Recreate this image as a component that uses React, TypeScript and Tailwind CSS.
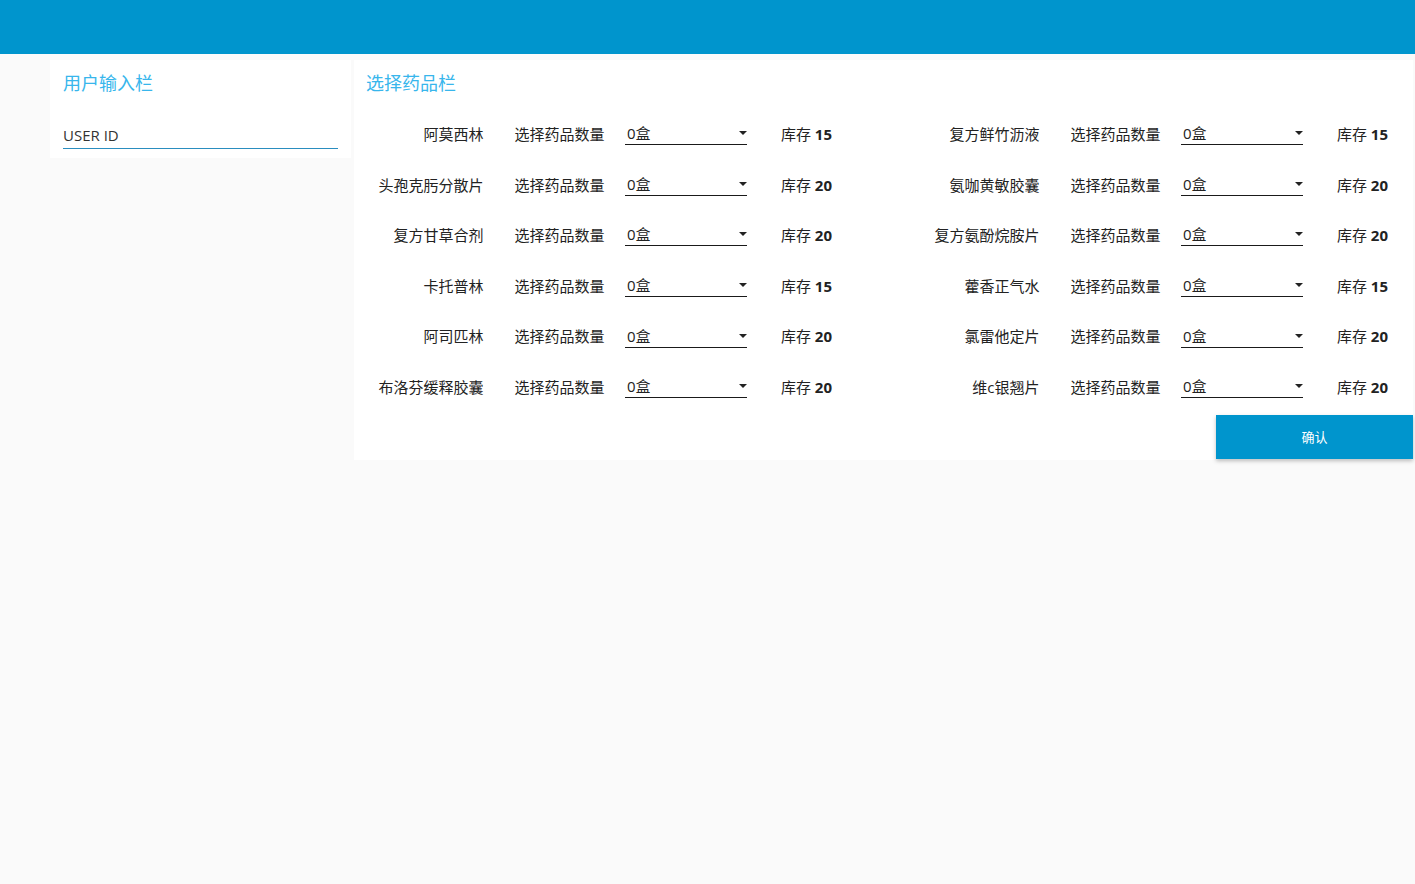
import React from "react";

const DRUGS: { name: string; stock: number }[] = [
  { name: "阿莫西林", stock: 15 },
  { name: "复方鲜竹沥液", stock: 15 },
  { name: "头孢克肟分散片", stock: 20 },
  { name: "氨咖黄敏胶囊", stock: 20 },
  { name: "复方甘草合剂", stock: 20 },
  { name: "复方氨酚烷胺片", stock: 20 },
  { name: "卡托普林", stock: 15 },
  { name: "藿香正气水", stock: 15 },
  { name: "阿司匹林", stock: 20 },
  { name: "氯雷他定片", stock: 20 },
  { name: "布洛芬缓释胶囊", stock: 20 },
  { name: "维c银翘片", stock: 20 },
];

function QtySelect() {
  return (
    <div className="w-[122px] h-[24px] border-b border-[#1a1a1a] flex items-end justify-between pl-[2px] pb-[1px]">
      <span className="text-[15px] leading-[20px] text-[#222]">0盒</span>
      <svg width="8" height="4" viewBox="0 0 8 4" className="mb-[8px]">
        <path d="M0 0 L8 0 L4 4 Z" fill="#222" />
      </svg>
    </div>
  );
}

function DrugRow({ name, stock }: { name: string; stock: number }) {
  return (
    <div className="h-[50.6px] flex items-center">
      <div className="w-[118px] text-right text-[15px] text-[#222]">{name}</div>
      <div className="ml-[31px] w-[91px] text-[15px] text-[#222]">选择药品数量</div>
      <div className="ml-[20px] -mt-[2px]">
        <QtySelect />
      </div>
      <div className="ml-[34px] text-[15px] text-[#222] whitespace-nowrap">
        库存 <span className="font-bold">{stock}</span>
      </div>
    </div>
  );
}

export default function App() {
  return (
    <div
      className="min-h-screen bg-[#fafafa]"
      style={{ fontFamily: '"Open Sans", "Noto Sans CJK SC", sans-serif' }}
    >
      <header className="h-[54px] bg-[#0095cd]" />
      <main className="flex items-start gap-[3px] pl-[50px] pr-[2px] pt-[6px]">
        <section className="w-[301px] bg-white px-[13px] pt-[11px] pb-[9px]">
          <h2 className="text-[18px] leading-[24px] text-[#38b6ec]">用户输入栏</h2>
          <div className="mt-[28px] border-b border-[#2a8dbf] pb-[1px]">
            <span className="text-[15px] leading-[20px] text-[#333]">USER ID</span>
          </div>
        </section>
        <section className="flex-1 bg-white pl-[12px] pt-[11px] flex flex-col">
          <h2 className="text-[18px] leading-[24px] text-[#38b6ec]">选择药品栏</h2>
          <div className="mt-[14px] grid grid-cols-[466px_466px] gap-x-[90px]">
            {DRUGS.map((d) => (
              <DrugRow key={d.name} name={d.name} stock={d.stock} />
            ))}
          </div>
          <div className="flex justify-end mt-[2px]">
            <button className="w-[197px] h-[44px] bg-[#0095cd] text-white text-[13px] pt-[2px] shadow-[0_2px_4px_rgba(0,0,0,0.25)]">
              确认
            </button>
          </div>
          <div className="h-[1px]" />
        </section>
      </main>
    </div>
  );
}
